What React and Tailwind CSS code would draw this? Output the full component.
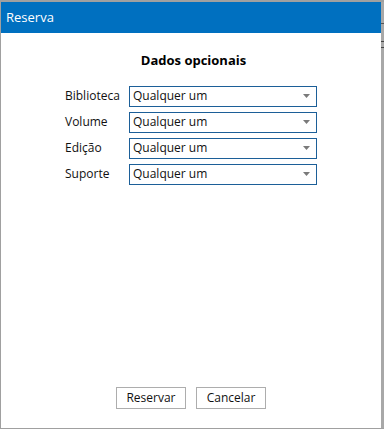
const fields = ['Biblioteca', 'Volume', 'Edição', 'Suporte'];

const Select = () => (
  <div className="flex h-[21px] w-[188px] items-center justify-between border border-[#1c5f98] bg-white pl-[3px] pr-[6px]">
    <span className="text-[12px] leading-none text-[#111]">Qualquer um</span>
    <svg width="7" height="4" viewBox="0 0 7 4">
      <path d="M0 0H7L3.5 4Z" fill="#7a7a7a" />
    </svg>
  </div>
);

export default function App() {
  return (
    <div
      className="flex h-[429px] w-[384px] bg-[#a0a0a0] pt-[2px] pl-[1px] pb-[1px]"
      style={{ fontFamily: '"Open Sans", "Noto Sans", sans-serif' }}
    >
      <div className="flex w-[380px] flex-col bg-white">
        {/* Title bar */}
        <div className="flex h-[31px] items-center bg-[#0070c0] pl-[5px] text-[13px] text-white">
          Reserva
        </div>

        {/* Body */}
        <div className="flex flex-1 flex-col items-center">
          <h2 className="mt-[18px] ml-[5px] text-[13px] font-bold text-black">Dados opcionais</h2>

          <div className="mt-[15px] flex flex-col gap-[5px]">
            {fields.map((f) => (
              <div key={f} className="flex items-center">
                <span className="w-[64px] text-[12px] leading-none text-[#111]">{f}</span>
                <Select />
              </div>
            ))}
          </div>

          <div className="mt-auto mb-[19px] flex gap-[10px]">
            <button className="h-[22px] w-[70px] border border-[#adadad] bg-white text-[12px] text-[#111]">
              Reservar
            </button>
            <button className="h-[22px] w-[70px] border border-[#adadad] bg-white text-[12px] text-[#111]">
              Cancelar
            </button>
          </div>
        </div>
      </div>
      {/* Right edge strip */}
      <div className="flex w-[3px] flex-col bg-[#a8a8a8]">
        <div className="mt-[21px] h-[1px] bg-[#555]" />
        <div className="mt-[17px] h-[1px] bg-[#444]" />
        <div className="mt-[5px] h-[1px] bg-[#444]" />
      </div>
    </div>
  );
}
